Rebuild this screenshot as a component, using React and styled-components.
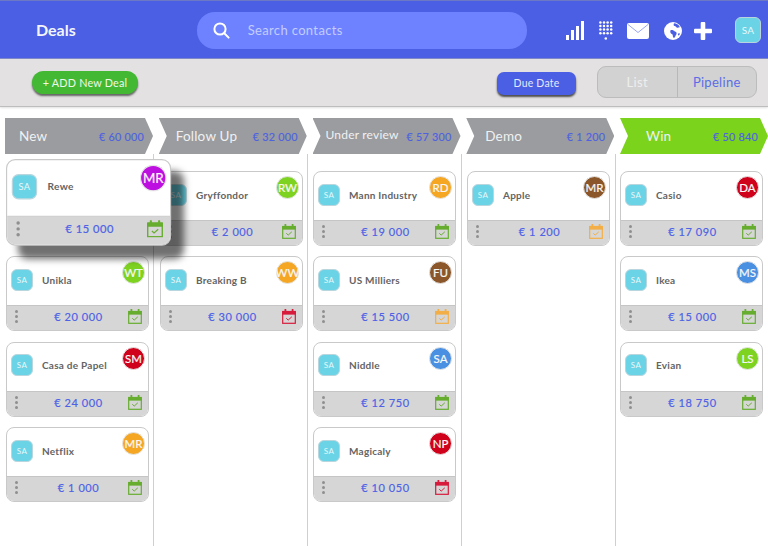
import React from "react";
import styled, { createGlobalStyle } from "styled-components";

const Global = createGlobalStyle`
  html, body { margin: 0; padding: 0; background: #fff; }
  body { font-family: Lato, "Open Sans", sans-serif; }
`;

const Page = styled.div`
  width: 768px; height: 546px; overflow: hidden; display: flex; flex-direction: column; background: #fff;
`;
const Header = styled.header`
  height: 59px; flex: none; box-sizing: border-box; display: flex; align-items: center;
  background: #4a5fe3; border-top: 1px solid #6d78c4; border-bottom: 1px solid #7f8bc9;
  padding: 3px 7px 0 36px;
`;
const Title = styled.h1`
  margin: 0 0 4px; width: 161px; font-size: 16px; font-weight: 700; color: #f4f5fd;
`;
const Search = styled.div`
  width: 331px; height: 37px; border-radius: 18px; background: #6e82ff; display: flex; align-items: center;
  padding-left: 16px; box-sizing: border-box; gap: 18px; color: #c3cdff; font-size: 13px; letter-spacing: .35px;
  margin-bottom: 2px;
`;
const Icons = styled.div`
  display: flex; align-items: center; margin-left: 39px; margin-bottom: 1px;
  svg { display: block; flex: none; }
`;
const Tile = styled.div`
  background: #6ad3e5; color: #e9f7fa; display: flex; align-items: center; justify-content: center;
  width: ${p => p.$size || 22}px; height: ${p => p.$size || 22}px; border-radius: 6px; border: 1px solid #b9d6de;
  box-sizing: border-box; font-size: ${p => p.$font || 8}px; font-weight: 400; letter-spacing: .3px; flex: none;
  margin-left: ${p => p.$ml || 0}px; margin-bottom: ${p => p.$mb || 0}px;
`;
const Toolbar = styled.div`
  height: 48px; flex: none; box-sizing: border-box; background: #e3e1e2; border-bottom: 1px solid #bdbdbd;
  box-shadow: 0 1px 2px rgba(0,0,0,.12); display: flex; align-items: center; padding: 0 11px 0 32px;
`;
const AddButton = styled.button`
  width: 106px; height: 23px; border: 0; padding: 0; border-radius: 12px; background: #43b833; color: #eef9ea;
  font: 400 10.8px Lato, sans-serif; letter-spacing: .2px; box-shadow: 0 2px 2px rgba(60,60,60,.75);
`;
const DueButton = styled.button`
  width: 79px; height: 23px; margin-left: 359px; border: 0; padding: 0; border-radius: 7px; background: #4a5fe3; color: #e6e9fb;
  font: 400 10.5px Lato, sans-serif; letter-spacing: .2px; box-shadow: 0 2px 2px rgba(40,40,40,.8); margin-top: 1px;
`;
const Segments = styled.div`
  width: 160px; height: 32px; margin-left: 21px; box-sizing: border-box; border: 1px solid #bcbcbc; border-radius: 9px;
  background: #d2d2d2; display: flex; margin-top: -1px;
`;
const Segment = styled.div`
  flex: 1; display: flex; align-items: center; justify-content: center; font-size: 13px; letter-spacing: .3px;
  color: ${p => (p.$active ? "#5a6de6" : "#eeeeee")};
  & + & { border-left: 1px solid #b8b8b8; }
`;
const Stages = styled.div`
  display: flex; flex: none; height: 36px; margin-top: 11px; padding-left: 5px; gap: 5.75px;
`;
const Stage = styled.div`
  width: 148px; flex: none; box-sizing: border-box; display: flex; align-items: center; justify-content: space-between;
  background: ${p => (p.$win ? "#7bd31c" : "#9a9c9f")};
  padding: 0 ${p => p.$pr || 9}px 0 ${p => p.$pl}px;
  clip-path: polygon(0 0, 140px 0, 148px 50%, 140px 100%, 0 100%, ${p => (p.$first ? "0" : "8px")} 50%);
`;
const StageName = styled.span`
  color: #f0f1f2; font-size: ${p => p.$size || 13.5}px; letter-spacing: .2px; margin-top: ${p => p.$up ? -3 : 0}px;
`;
const StageSum = styled.span`
  color: #4d62e0; font-size: 10.8px; letter-spacing: .25px; -webkit-text-stroke: .15px #4d62e0;
`;
const Board = styled.div`
  flex: 1; display: flex; min-height: 0;
`;
const Column = styled.section`
  position: relative; width: 154px; flex: none; box-sizing: border-box; display: flex; flex-direction: column; gap: 10.4px;
  padding: 17px 5px 0 ${p => p.$pl || 6}px; border-right: 1px solid #cfcfcf;
  &:last-child { border-right: 0; flex: 1; width: auto; padding-right: 5px; }
`;
const Slot = styled.div`
  height: 75px; flex: none;
`;
const CardBox = styled.article`
  width: 143px; height: 75px; flex: none; box-sizing: border-box; position: relative; border: 1px solid #c9c9c9; border-radius: 8px;
  background: #fff; overflow: visible; display: flex; flex-direction: column;
`;
const CardTop = styled.div`
  flex: 1; display: flex; align-items: center; gap: 9px; padding: 0 0 3px 4px; min-height: 0;
`;
const CardName = styled.span`
  font-size: 10px; font-weight: 700; color: #646464; letter-spacing: .25px;
`;
const Badge = styled.div`
  position: absolute; top: 4px; right: 3px; width: 23px; height: 23px; border-radius: 50%; box-sizing: border-box;
  border: 1px solid #e6e6e6; background: ${p => p.$color}; color: #f7f7f7; display: flex; align-items: center; justify-content: center;
  font-size: 11.5px; font-weight: 400; white-space: nowrap; -webkit-text-stroke: .2px #f7f7f7;
`;
const CardFoot = styled.div`
  height: 25px; flex: none; box-sizing: border-box; background: #d6d6d6; border-top: 1px solid #c5c5c5; border-radius: 0 0 7px 7px;
  display: grid; grid-template-columns: 1fr auto 1fr; align-items: center; padding: 0 6px 3px 8px;
  svg { display: block; justify-self: end; }
`;
const Dots = styled.div`
  display: flex; flex-direction: column; gap: 2px; justify-self: start;
  i { display: block; width: 3px; height: 3px; border-radius: 50%; background: #8f8f8f; }
`;
const Amount = styled.span`
  color: #4d62e6; font-size: 11px; font-weight: 400; letter-spacing: .55px; -webkit-text-stroke: .2px #4d62e6;
`;
const Dragged = styled(CardBox)`
  position: absolute; left: 6px; top: 5px; z-index: 5; transform: scale(1.155); transform-origin: 0 0;
  box-shadow: 10.5px 11px 6px rgba(0,0,0,.56);
  ${Amount} { font-size: 9.6px; letter-spacing: .45px; }
  ${CardName} { font-size: 8.8px; }
`;

const SearchIcon = () => (
  <svg width="17" height="17" viewBox="0 0 17 17" fill="none" stroke="#fff" strokeWidth="2" strokeLinecap="round">
    <circle cx="7" cy="7" r="5.6" /><path d="M11.3 11.3 15.6 15.6" />
  </svg>
);
const Bars = () => (
  <svg width="19" height="19" viewBox="0 0 19 19" fill="#fff">
    <rect x="0" y="14" width="3" height="5" /><rect x="5" y="9" width="3" height="10" />
    <rect x="10" y="5" width="3" height="14" /><rect x="15" y="0" width="3" height="19" />
  </svg>
);
const Dial = () => {
  const dots = [];
  for (let r = 0; r < 4; r++) for (let c = 0; c < 4; c++) dots.push(<circle key={`${r}${c}`} cx={1.4 + c * 3.6} cy={1.4 + r * 3.6} r="1.25" />);
  return (
    <svg width="14" height="19" viewBox="0 0 14 19" fill="#fff" style={{ marginLeft: 14 }}>
      {dots}<circle cx="6.800" cy="17.600" r="1.25" />
    </svg>
  );
};
const Mail = () => (
  <svg width="22" height="16" viewBox="0 0 22 16" style={{ marginLeft: 14 }}>
    <rect width="22" height="16" rx="2" fill="#fff" />
    <path d="M1 1.5 11 9.5 21 1.5" fill="none" stroke="#9aa6ee" strokeWidth="1" />
  </svg>
);
const Globe = () => (
  <svg width="18" height="18" viewBox="0 0 18 18" style={{ marginLeft: 15 }}>
    <circle cx="9" cy="9" r="9" fill="#fff" />
    <path d="M10 1.200c2 .1 5 1.200 6 4.200-1.200-.4-1.800.8-3 .3-1-.5-1.200-1.600-2.200-1.800-1 .2-1.600-1-.8-2.700zM6.500 8.200c1.600-.6 3.300.2 4.300 1.200 1.200.2 2 1 1.800 2-.2 1.300-1.300 2-1.500 3.300-.2.800-1 1.300-1.800.7-.7-1-.2-2.200-1-3.200-1.300-.3-2.600-1.600-1.800-4zM14.300 11.500c.7-.5 1.500-.3 1.700.3-.3.800-1 1.700-1.800 1.700-.4-.6-.3-1.500.1-2z" fill="#4a5fe3" />
  </svg>
);
const Plus = () => (
  <svg width="18" height="18" viewBox="0 0 18 18" fill="#fff" style={{ marginLeft: 12 }}>
    <rect x="6.700" y="0" width="4.600" height="18" rx="1" /><rect x="0" y="6.700" width="18" height="4.600" rx="1" />
  </svg>
);
const Calendar = ({ color }) => (
  <svg width="14" height="15" viewBox="0 0 14 15" fill="none" stroke={color}>
    <rect x=".7" y="2.500" width="12.600" height="11.800" strokeWidth="1.200" />
    <path d="M.7 2.500h12.600v2.700H.7z" fill={color} strokeWidth=".8" />
    <path d="M3.400 .6v2.400M10.600 .6v2.400" strokeWidth="1.800" strokeLinecap="round" />
    <path d="M4.300 9.300 6.200 11.100 9.800 7.800" strokeWidth="1" />
  </svg>
);

const G = "#67ad2f", R = "#d81b3c", O = "#f3ae45";
const columns = [
  { stage: "New", sum: "€ 60 000", pl: 14, first: true, drag: true, cards: [
    ["Unikla", "WT", "#7ed321", "€ 20 000", G], ["Casa de Papel", "SM", "#d0021b", "€ 24 000", G], ["Netflix", "MR", "#f5a623", "€ 1 000", G] ] },
  { stage: "Follow Up", sum: "€ 32 000", pl: 17, cards: [
    ["Gryffondor", "RW", "#7ed321", "€ 2 000", G], ["Breaking B", "WW", "#f5a623", "€ 30 000", R] ] },
  { stage: "Under review", sum: "€ 57 300", pl: 13, size: 12, up: true, colPl: 5, cards: [
    ["Mann Industry", "RD", "#f5a623", "€ 19 000", G], ["US Milliers", "FU", "#8b572a", "€ 15 500", O], ["Niddle", "SA", "#4a90e2", "€ 12 750", G], ["Magicaly", "NP", "#d0021b", "€ 10 050", R] ] },
  { stage: "Demo", sum: "€ 1 200", pl: 19, colPl: 5, cards: [ ["Apple", "MR", "#8b572a", "€ 1 200", O] ] },
  { stage: "Win", sum: "€ 50 840", pl: 26, win: true, pr: 10, colPl: 4, cards: [
    ["Casio", "DA", "#d0021b", "€ 17 090", G], ["Ikea", "MS", "#4a90e2", "€ 15 000", G], ["Evian", "LS", "#7ed321", "€ 18 750", G] ] },
];

const CardBody = ({ name, initials, color, amount, cal }) => (
  <>
    <CardTop><Tile>SA</Tile><CardName>{name}</CardName></CardTop>
    <Badge $color={color}>{initials}</Badge>
    <CardFoot><Dots><i /><i /><i /></Dots><Amount>{amount}</Amount><Calendar color={cal} /></CardFoot>
  </>
);

export default function App() {
  return (
    <Page>
      <Global />
      <Header>
        <Title>Deals</Title>
        <Search><SearchIcon />Search contacts</Search>
        <Icons><Bars /><Dial /><Mail /><Globe /><Plus /></Icons>
        <Tile $size={26} $font={10} $ml={23} $mb={2}>SA</Tile>
      </Header>
      <Toolbar>
        <AddButton>+ ADD New Deal</AddButton>
        <DueButton>Due Date</DueButton>
        <Segments><Segment>List</Segment><Segment $active>Pipeline</Segment></Segments>
      </Toolbar>
      <Stages>
        {columns.map(c => (
          <Stage key={c.stage} $win={c.win} $first={c.first} $pl={c.pl} $pr={c.pr}>
            <StageName $size={c.size} $up={c.up}>{c.stage}</StageName><StageSum>{c.sum}</StageSum>
          </Stage>
        ))}
      </Stages>
      <Board>
        {columns.map(c => (
          <Column key={c.stage} $pl={c.colPl}>
            {c.drag && <Slot />}
            {c.drag && (
              <Dragged><CardBody name="Rewe" initials="MR" color="#bd10e0" amount="€ 15 000" cal={G} /></Dragged>
            )}
            {c.cards.map(([name, initials, color, amount, cal]) => (
              <CardBox key={name}><CardBody name={name} initials={initials} color={color} amount={amount} cal={cal} /></CardBox>
            ))}
          </Column>
        ))}
      </Board>
    </Page>
  );
}
